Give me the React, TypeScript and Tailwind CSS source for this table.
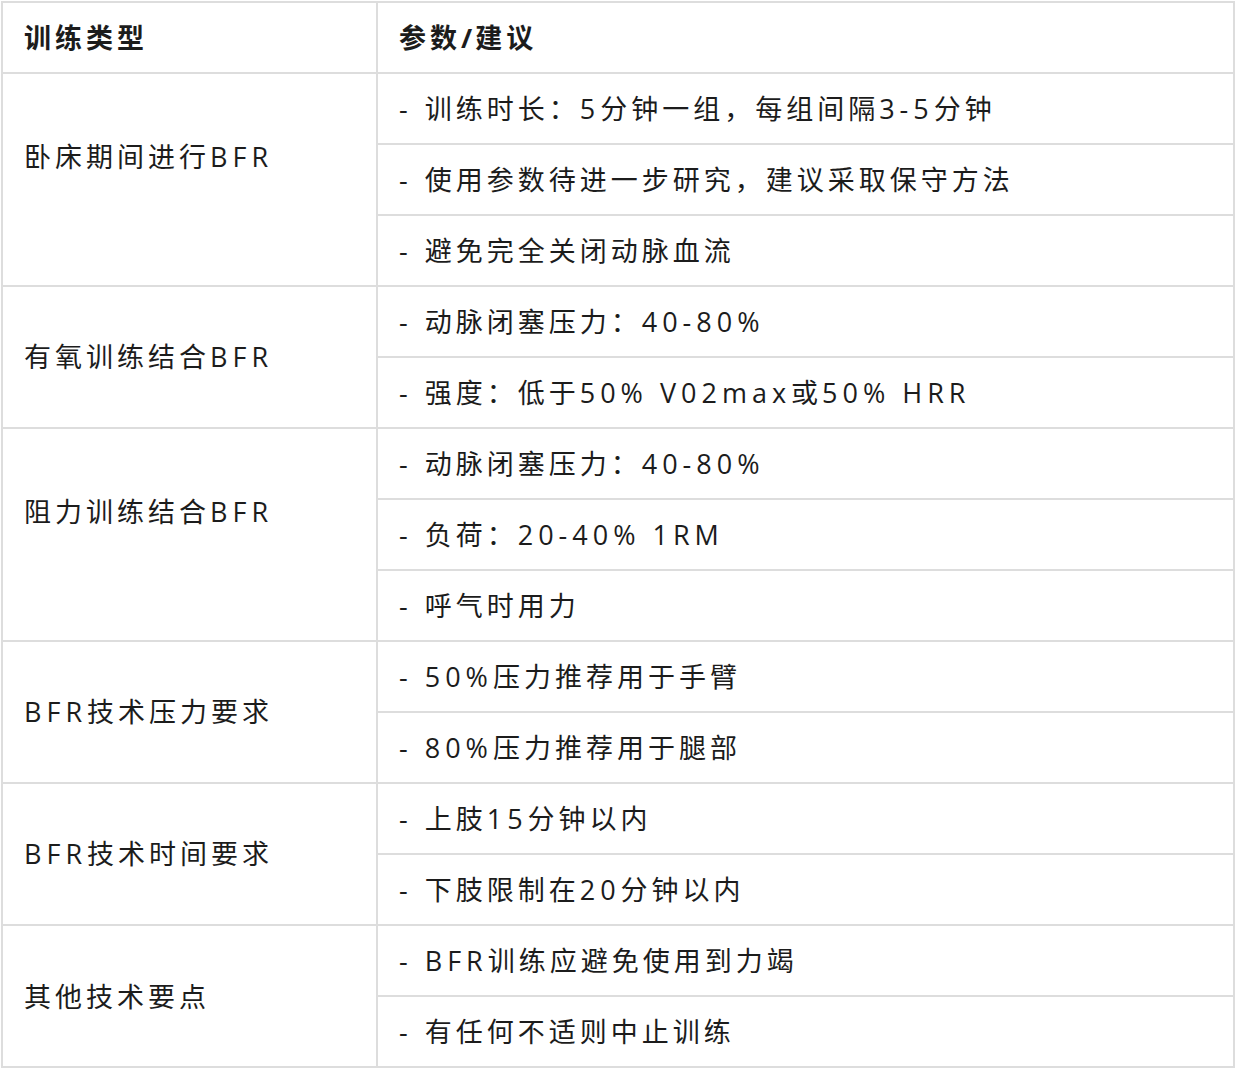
const rows: { type: string; items: string[]; lift?: boolean }[] = [
  {
    type: "卧床期间进行BFR",
    items: [
      "- 训练时长：5分钟一组，每组间隔3-5分钟",
      "- 使用参数待进一步研究，建议采取保守方法",
      "- 避免完全关闭动脉血流",
    ],
    lift: true,
  },
  {
    type: "有氧训练结合BFR",
    items: ["- 动脉闭塞压力：40-80%", "- 强度：低于50% V02max或50% HRR"],
  },
  {
    type: "阻力训练结合BFR",
    items: ["- 动脉闭塞压力：40-80%", "- 负荷：20-40% 1RM", "- 呼气时用力"],
    lift: true,
  },
  {
    type: "BFR技术压力要求",
    items: ["- 50%压力推荐用于手臂", "- 80%压力推荐用于腿部"],
  },
  {
    type: "BFR技术时间要求",
    items: ["- 上肢15分钟以内", "- 下肢限制在20分钟以内"],
  },
  {
    type: "其他技术要点",
    items: ["- BFR训练应避免使用到力竭", "- 有任何不适则中止训练"],
  },
];

// latin runs and CJK runs are spaced differently in the source
function Mixed({ text, bold }: { text: string; bold?: boolean }) {
  const parts = text.match(/[\u0000-\u00ff]+|[^\u0000-\u00ff]+/g) ?? [];
  return (
    <span className="whitespace-pre">
      {parts.map((p, i) =>
        /^[\u0000-\u00ff]/.test(p) ? (
          <span
            key={i}
            className={
              bold
                ? "font-['Open_Sans',sans-serif] tracking-[3px]"
                : "font-['Open_Sans',sans-serif] tracking-[5px]"
            }
          >
            {p}
          </span>
        ) : (
          <span key={i} className="tracking-[4px]">
            {p}
          </span>
        )
      )}
    </span>
  );
}

export default function App() {
  return (
    <div className="min-h-screen bg-white pt-px pl-px font-['Noto_Sans_CJK_SC',sans-serif] text-[27px] text-[#1c1c1c]">
      <div className="w-[1234px] border-2 border-[#dddddd]">
        <div className="flex h-[71px] border-b-2 border-[#dddddd] font-bold">
          <div className="flex w-[375px] items-center border-r-2 border-[#dddddd] pl-[21px]">
            <Mixed text="训练类型" bold />
          </div>
          <div className="flex flex-1 items-center pl-[21px]">
            <Mixed text="参数/建议" bold />
          </div>
        </div>
        {rows.map((row, i) => (
          <div
            key={row.type}
            className={
              i < rows.length - 1
                ? "flex border-b-2 border-[#dddddd]"
                : "flex"
            }
          >
            <div
              className={
                row.lift
                  ? "flex w-[375px] items-center border-r-2 border-[#dddddd] pb-[46px] pl-[21px]"
                  : "flex w-[375px] items-center border-r-2 border-[#dddddd] pl-[21px]"
              }
            >
              <Mixed text={row.type} />
            </div>
            <div className="flex flex-1 flex-col">
              {row.items.map((item, j) => (
                <div
                  key={j}
                  className={
                    j < row.items.length - 1
                      ? "flex h-[71px] items-center border-b-2 border-[#dddddd] pl-[21px]"
                      : "flex h-[69px] items-center pl-[21px]"
                  }
                >
                  <Mixed text={item} />
                </div>
              ))}
            </div>
          </div>
        ))}
      </div>
    </div>
  );
}
